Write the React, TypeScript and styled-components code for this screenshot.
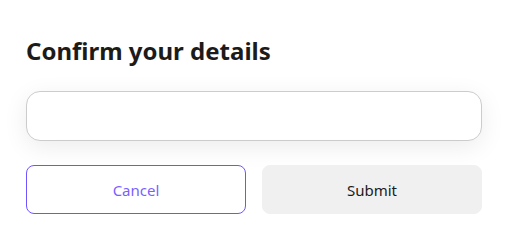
import React from "react";
import styled, { createGlobalStyle } from "styled-components";

const Global = createGlobalStyle`
  html, body { margin: 0; padding: 0; background: #ffffff; }
  body { font-family: "Noto Sans", "Open Sans", Arial, sans-serif; }
`;

const Panel = styled.div`
  box-sizing: border-box;
  width: 508px;
  padding: 35px 26px 26px;
  display: flex;
  flex-direction: column;
`;

const Title = styled.h1`
  margin: 0 0 24px;
  font-size: 24px;
  line-height: 32px;
  font-weight: 700;
  color: #1b1b1b;
`;

const Field = styled.input`
  box-sizing: border-box;
  width: 100%;
  height: 50px;
  border: 1px solid #cccccc;
  border-radius: 14px;
  background: #ffffff;
  box-shadow: 0 6px 24px rgba(0, 0, 0, 0.08);
  padding: 0 16px;
  font: inherit;
  font-size: 16px;
  outline: none;
`;

const Actions = styled.div`
  margin-top: 24px;
  display: grid;
  grid-template-columns: 1fr 1fr;
  gap: 16px;
`;

const Button = styled.button<{ $variant: "outline" | "solid" }>`
  box-sizing: border-box;
  height: 49px;
  border-radius: 8px;
  font-family: inherit;
  font-size: 15px;
  cursor: pointer;
  border: 1px solid ${(p) => (p.$variant === "outline" ? "#6e55ff" : "#f0f0f0")};
  background: ${(p) => (p.$variant === "outline" ? "#ffffff" : "#f0f0f0")};
  color: ${(p) => (p.$variant === "outline" ? "#7a5fff" : "#1b1b1b")};
`;

export default function App() {
  return (
    <>
      <Global />
      <Panel>
        <Title>Confirm your details</Title>
        <Field type="text" aria-label="Details" />
        <Actions>
          <Button $variant="outline">Cancel</Button>
          <Button $variant="solid">Submit</Button>
        </Actions>
      </Panel>
    </>
  );
}
